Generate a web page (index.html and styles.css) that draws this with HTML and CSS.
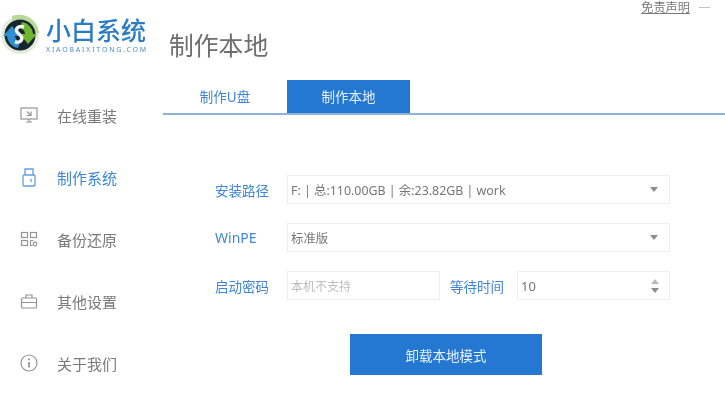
FILE: index.html
```html
<!DOCTYPE html>
<html lang="zh-CN">
<head>
    <meta charset="UTF-8">
    <title>小白系统 - 制作本地</title>
    <link rel="stylesheet" href="styles.css">
</head>
<body>
    <div class="app">
        <aside class="sidebar">
            <div class="logo">
                <svg class="logo-mark" width="40" height="44" viewBox="0 0 40 44">
                    <circle cx="20" cy="23" r="19" fill="#e3ecdc"/>
                    <path d="M12 4 A20 20 0 0 1 39 21 L33 21 A14 14 0 0 0 12 9 Z" fill="#b9d99a"/>
                    <circle cx="20" cy="23" r="15.5" fill="#17262c"/>
                    <path d="M22 10 A13 13 0 0 1 33 22 L37 22 L28 32 L20 22 L25 22 A7 7 0 0 0 20 16 Z" fill="#6fb52f"/>
                    <path d="M18 36 A13 13 0 0 1 7 24 L3 24 L12 14 L20 24 L15 24 A7 7 0 0 0 20 30 Z" fill="#2f8fd0"/>
                    <path d="M24 15 C17 13 14 18 19 22 C24 26 22 31 15 30" fill="none" stroke="#f4f6f4" stroke-width="3.5"/>
                </svg>
                <div class="logo-text">
                    <div class="logo-name">小白系统</div>
                    <div class="logo-sub">XIAOBAIXITONG.COM</div>
                </div>
            </div>
            <nav class="nav">
                <a class="nav-item">
                    <svg class="nav-icon" width="18" height="18" viewBox="0 0 18 18" fill="none" stroke="currentColor" stroke-width="1.2">
                        <rect x="1" y="2" width="16" height="11"/>
                        <path d="M6 16h6M9 13v3M7 5.5l4 4M11 5.5v4H7"/>
                    </svg>
                    <span>在线重装</span>
                </a>
                <a class="nav-item is-active">
                    <svg class="nav-icon" width="18" height="20" viewBox="0 0 18 20" fill="none" stroke="currentColor" stroke-width="1.3">
                        <rect x="3" y="8" width="12" height="11" rx="1"/>
                        <path d="M5 8V2h8v6M11 12v3"/>
                    </svg>
                    <span>制作系统</span>
                </a>
                <a class="nav-item">
                    <svg class="nav-icon" width="18" height="18" viewBox="0 0 18 18" fill="none" stroke="currentColor" stroke-width="1.2">
                        <rect x="1.5" y="2.5" width="6" height="5"/>
                        <rect x="1.5" y="10.5" width="6" height="5"/>
                        <rect x="10.5" y="2.5" width="6" height="5"/>
                        <path d="M10.5 10.5h3M10.5 10.5v5h2"/>
                        <circle cx="15" cy="14" r="1.8"/>
                    </svg>
                    <span>备份还原</span>
                </a>
                <a class="nav-item">
                    <svg class="nav-icon" width="18" height="18" viewBox="0 0 18 18" fill="none" stroke="currentColor" stroke-width="1.2">
                        <rect x="1.5" y="6" width="15" height="10" rx="1"/>
                        <path d="M6 6V3h6v3M1.5 10.5h15"/>
                    </svg>
                    <span>其他设置</span>
                </a>
                <a class="nav-item">
                    <svg class="nav-icon" width="18" height="18" viewBox="0 0 18 18" fill="none" stroke="currentColor" stroke-width="1.2">
                        <circle cx="9" cy="9" r="8"/>
                        <path d="M9 8v5.5" stroke-width="1.8"/>
                        <path d="M9 4.5v1.8" stroke-width="1.8"/>
                    </svg>
                    <span>关于我们</span>
                </a>
            </nav>
        </aside>

        <main class="main">
            <div class="topbar">
                <a class="disclaimer">免责声明</a>
                <span class="minimize"></span>
            </div>
            <h1 class="page-title">制作本地</h1>
            <div class="tabs">
                <div class="tab">制作U盘</div>
                <div class="tab is-active">制作本地</div>
            </div>
            <form class="form">
                <div class="form-row">
                    <label class="form-label">安装路径</label>
                    <div class="field field-select">
                        <span>F: | 总:110.00GB | 余:23.82GB | work</span>
                        <span class="arrow-down"></span>
                    </div>
                </div>
                <div class="form-row">
                    <label class="form-label form-label-latin">WinPE</label>
                    <div class="field field-select">
                        <span>标准版</span>
                        <span class="arrow-down"></span>
                    </div>
                </div>
                <div class="form-row form-row-last">
                    <label class="form-label">启动密码</label>
                    <div class="field field-password">本机不支持</div>
                    <label class="form-label form-label-inline">等待时间</label>
                    <div class="field field-number">
                        <span>10</span>
                        <span class="spinner">
                            <span class="spin-up"></span>
                            <span class="spin-down"></span>
                        </span>
                    </div>
                </div>
                <button class="submit-btn" type="button">卸载本地模式</button>
            </form>
        </main>
    </div>
</body>
</html>
```

FILE: styles.css
```css
html, body {
    margin: 0;
    padding: 0;
}
body {
    font-family: "Noto Sans", "Noto Sans CJK SC", sans-serif;
    background-color: #ffffff;
    color: #6b6b6b;
}
.app {
    display: flex;
    width: 725px;
    height: 407px;
    overflow: hidden;
    filter: blur(0.4px); /* source screenshot is soft */
}

/* Sidebar */
.sidebar {
    width: 163px;
    flex-shrink: 0;
}
.logo {
    display: flex;
    align-items: flex-start;
    height: 84px;
    box-sizing: border-box;
    padding: 12px 0 0 0;
    gap: 6px;
}
.logo-text {
    padding-top: 3px;
}
.logo-name {
    font-size: 25px;
    line-height: 30px;
    font-weight: 500;
    color: #2a7cc4;
    white-space: nowrap;
}
.logo-sub {
    font-size: 7px;
    line-height: 9px;
    letter-spacing: 1.8px;
    color: #4d8fc7;
    white-space: nowrap;
}
.nav-item {
    display: flex;
    align-items: center;
    height: 62px;
    padding-left: 20px;
    gap: 19px;
    font-size: 15px;
    color: #7a7a7a;
}
.nav-item.is-active {
    color: #3b86d8;
}
.nav-icon {
    flex-shrink: 0;
    opacity: 0.8;
}

/* Main */
.main {
    flex: 1;
    min-width: 0;
}
.topbar {
    display: flex;
    justify-content: flex-end;
    align-items: flex-start;
    height: 28px;
    box-sizing: border-box;
    padding: 1px 15px 0 0;
    gap: 9px;
}
.disclaimer {
    font-size: 12.2px;
    line-height: 13px;
    color: #7a7a7a;
    text-decoration: underline;
}
.minimize {
    width: 11px;
    height: 1px;
    margin-top: 6px;
    background-color: #c4c4c4;
}
.page-title {
    margin: 0;
    padding-left: 6px;
    font-size: 24.8px;
    line-height: 34px;
    font-weight: 400;
    color: #6e6e6e;
}
.tabs {
    display: flex;
    margin-top: 18px;
    border-bottom: 2px solid #8fb2d8;
}
.tab {
    width: 124px;
    height: 33px;
    line-height: 34px;
    text-align: center;
    font-size: 13.5px;
    color: #3f87d4;
}
.tab.is-active {
    width: 123px;
    background-color: #2478d2;
    color: #e8f1fb;
}

/* Form */
.form {
    margin: 60px 0 0 52px;
    width: 455px;
}
.form-row {
    display: flex;
    align-items: center;
    height: 29px;
    margin-bottom: 19px;
}
.form-row-last {
    margin-bottom: 34px;
}
.form-label {
    width: 72px;
    flex-shrink: 0;
    font-size: 13.5px;
    color: #3f87d4;
}
.form-label-latin {
    font-size: 14px;
}
.form-label-inline {
    width: 77px;
    padding-left: 10px;
    box-sizing: border-box;
}
.field {
    display: flex;
    align-items: center;
    justify-content: space-between;
    height: 29px;
    box-sizing: border-box;
    padding: 0 10px 0 3px;
    border: 1px solid #eeeeee;
    font-size: 12.4px;
    color: #777777;
}
.field-select {
    flex: 1;
}
.field-password {
    width: 153px;
    font-size: 12px;
    color: #bdbdbd;
}
.field-number {
    width: 153px;
    font-size: 13px;
}
.arrow-down {
    width: 0;
    height: 0;
    margin-right: 1px;
    border-left: 4px solid transparent;
    border-right: 4px solid transparent;
    border-top: 5px solid #8d8d8d;
}
.spinner {
    display: flex;
    flex-direction: column;
    gap: 4px;
}
.spin-up, .spin-down {
    width: 0;
    height: 0;
    border-left: 4px solid transparent;
    border-right: 4px solid transparent;
}
.spin-up {
    border-bottom: 5px solid #bbbbbb;
}
.spin-down {
    border-top: 5px solid #8d8d8d;
}
.submit-btn {
    display: block;
    width: 192px;
    height: 41px;
    margin: 0 0 0 135px;
    padding: 0;
    border: 0;
    background-color: #2478d2;
    color: #e8f1fb;
    font-family: inherit;
    font-size: 13.5px;
}
```
